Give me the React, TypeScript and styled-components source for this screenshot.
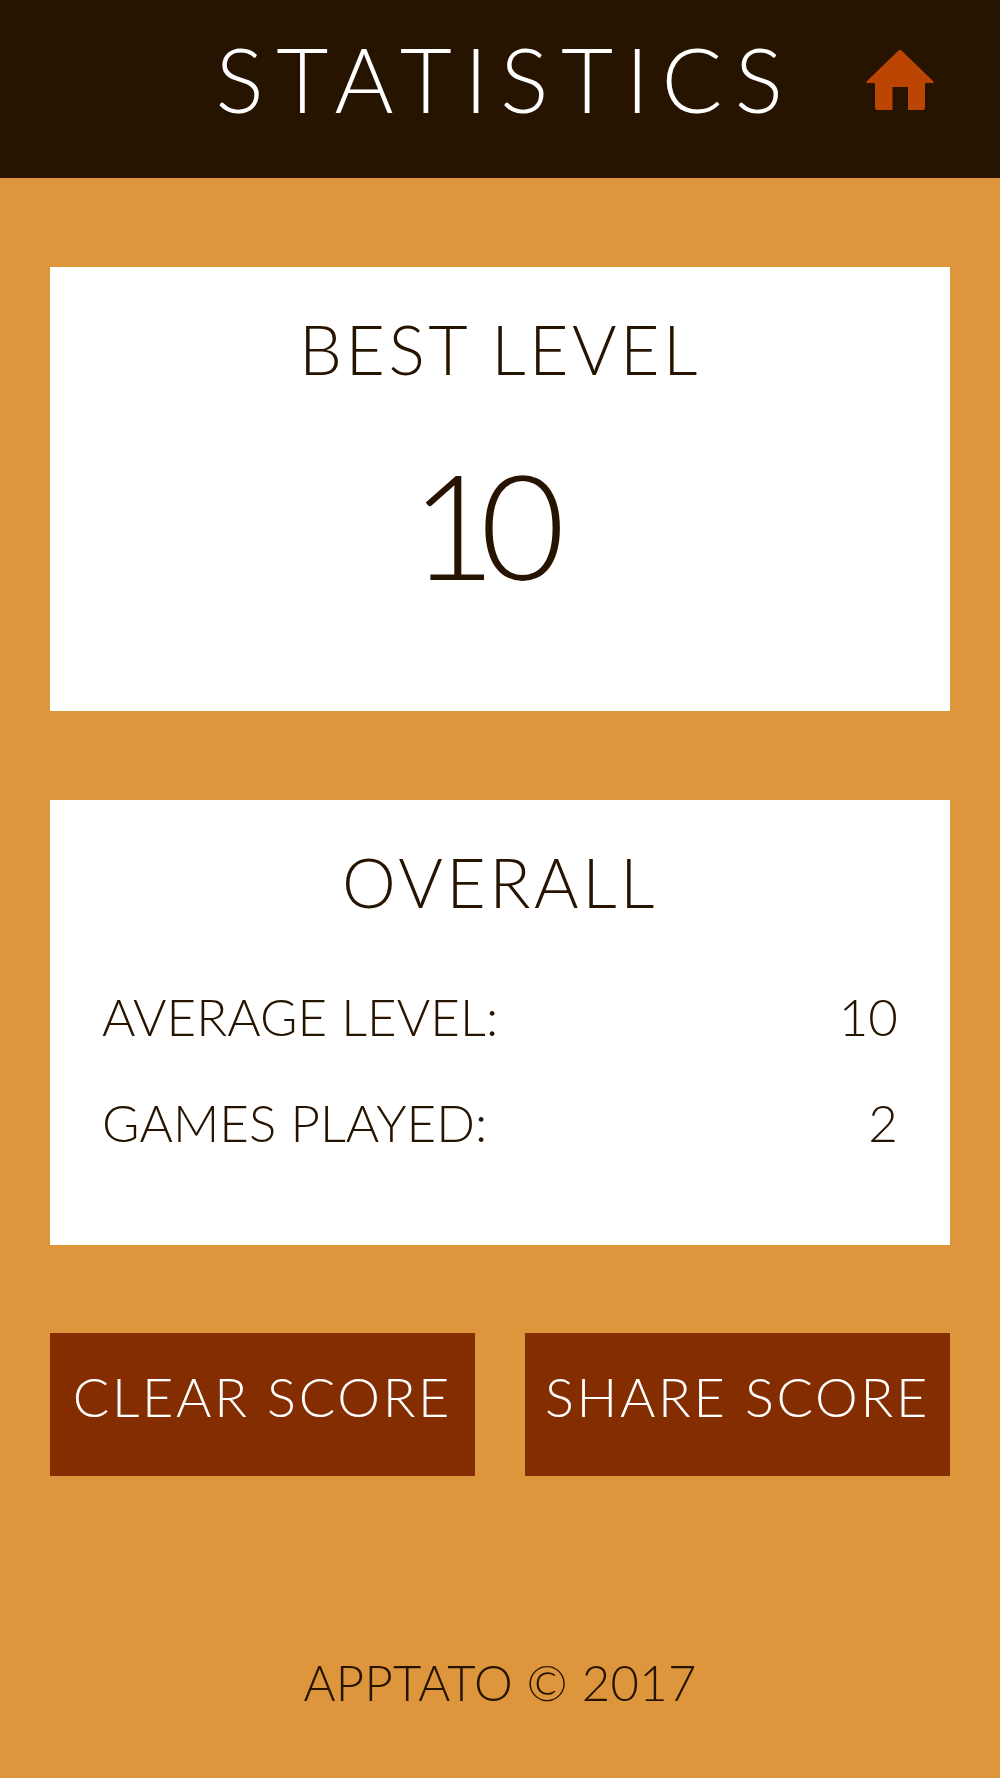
import styled, { createGlobalStyle } from "styled-components";

const dark = "#261300";

const GlobalStyle = createGlobalStyle`
  html, body {
    margin: 0;
    padding: 0;
    background: #dd963b;
  }
  * {
    box-sizing: border-box;
  }
`;

const Page = styled.div`
  width: 1000px;
  height: 1778px;
  display: flex;
  flex-direction: column;
  background: #dd963b;
  font-family: "Lato", "Liberation Sans", sans-serif;
  font-weight: 300;
  color: ${dark};
  overflow: hidden;
`;

const Header = styled.header`
  height: 178px;
  flex: none;
  display: grid;
  grid-template-columns: 1fr auto 1fr;
  align-items: center;
  background: ${dark};
`;

const Title = styled.h1`
  grid-column: 2;
  margin: 0 0 22px;
  padding-left: 11px;
  font-size: 90px;
  line-height: 112px;
  font-weight: 300;
  letter-spacing: 12.5px;
  color: #ffffff;
`;

const HomeButton = styled.button`
  justify-self: end;
  margin: 0 66px 18px 0;
  padding: 0;
  width: 68px;
  height: 60px;
  border: 0;
  background: none;
  display: block;
`;

const Main = styled.main`
  flex: 1;
  display: flex;
  flex-direction: column;
  padding: 88.6px 50px 0;
  gap: 88.4px;
`;

const Card = styled.section`
  height: 444.8px;
  background: #ffffff;
  padding: 41px 52px 0;
  text-align: center;
`;

const CardTitle = styled.h2`
  margin: 0;
  font-size: 68px;
  line-height: 82px;
  font-weight: 300;
  letter-spacing: 3.5px;
`;

const BestValue = styled.div`
  margin-top: 43px;
  padding-right: 40px;
  font-size: 147px;
  line-height: 180px;
  letter-spacing: -16px;
`;

const StatRows = styled.div`
  margin-top: 63px;
  display: flex;
  flex-direction: column;
  gap: 44px;
`;

const StatRow = styled.div`
  display: flex;
  justify-content: space-between;
  font-size: 51px;
  line-height: 62px;
  letter-spacing: 0.1px;
`;

const Actions = styled.div`
  display: flex;
  justify-content: space-between;
`;

const ActionButton = styled.button`
  width: 425px;
  height: 143px;
  margin: 0;
  padding: 0 0 16px;
  border: 0;
  background: #842d00;
  color: #ffffff;
  font: inherit;
  font-size: 54px;
  line-height: 65px;
  letter-spacing: 2.7px;
  white-space: nowrap;
`;

const Footer = styled.footer`
  margin-top: 88px;
  text-align: center;
  font-size: 49px;
  line-height: 60px;
  letter-spacing: 0.3px;
`;

const HomeIcon = () => (
  <svg width="68" height="60" viewBox="0 0 68 60" fill="#bc4504">
    <path d="M32 1a3 3 0 0 1 4 0l31 30a1 1 0 0 1-1 2h-7v25a2 2 0 0 1-2 2H42V37H26.500v23H11a2 2 0 0 1-2-2V33H2a1 1 0 0 1-1-2z" />
  </svg>
);

export default function App() {
  return (
    <Page>
      <GlobalStyle />
      <Header>
        <Title>STATISTICS</Title>
        <HomeButton aria-label="Home">
          <HomeIcon />
        </HomeButton>
      </Header>
      <Main>
        <Card>
          <CardTitle>BEST LEVEL</CardTitle>
          <BestValue>10</BestValue>
        </Card>
        <Card>
          <CardTitle>OVERALL</CardTitle>
          <StatRows>
            <StatRow>
              <span>AVERAGE LEVEL:</span>
              <span>10</span>
            </StatRow>
            <StatRow>
              <span>GAMES PLAYED:</span>
              <span>2</span>
            </StatRow>
          </StatRows>
        </Card>
        <Actions>
          <ActionButton>CLEAR SCORE</ActionButton>
          <ActionButton>SHARE SCORE</ActionButton>
        </Actions>
        <Footer>APPTATO © 2017</Footer>
      </Main>
    </Page>
  );
}
